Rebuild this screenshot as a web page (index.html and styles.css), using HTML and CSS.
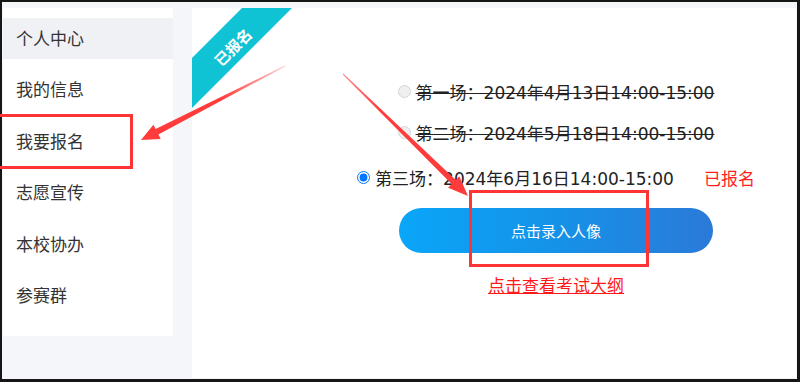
FILE: index.html
```html
<!DOCTYPE html>
<html lang="zh-CN">
<head>
  <meta charset="UTF-8">
  <meta name="viewport" content="width=device-width, initial-scale=1.0">
  <title>我要报名</title>
  <link rel="stylesheet" href="styles.css">
</head>
<body>

<div class="frame">
  <aside class="sidebar">
    <div class="menu-item active">个人中心</div>
    <div class="menu-item">我的信息</div>
    <div class="menu-item">我要报名</div>
    <div class="menu-item">志愿宣传</div>
    <div class="menu-item">本校协办</div>
    <div class="menu-item">参赛群</div>
  </aside>

  <main class="panel">
    <!-- corner ribbon -->
    <svg class="ribbon" width="100" height="100" viewBox="0 0 100 100">
      <polygon points="50,0 100,0 0,100 0,50" fill="#10c3d4"/>
      <text transform="translate(41 39) rotate(-45)" text-anchor="middle" dominant-baseline="central"
            fill="#fff" font-size="15" font-weight="bold">已报名</text>
    </svg>

    <div class="content">
      <label class="session done">
        <input type="radio" name="session" disabled>
        <span>第一场：2024年4月13日14:00-15:00</span>
      </label>
      <label class="session done">
        <input type="radio" name="session" disabled>
        <span>第二场：2024年5月18日14:00-15:00</span>
      </label>
      <label class="session mine">
        <input type="radio" name="session" checked>
        <span>第三场：2024年6月16日14:00-15:00</span>
        <em class="tag">已报名</em>
      </label>

      <button class="capture">点击录入人像</button>
      <a class="outline-link" href="#">点击查看考试大纲</a>
    </div>
  </main>
</div>

<!-- red annotation marks drawn over the page -->
<svg class="marks" width="800" height="382" viewBox="0 0 800 382">
  <defs>
    <linearGradient id="fade1" gradientUnits="userSpaceOnUse" x1="285" y1="66" x2="141" y2="140">
      <stop offset="0" stop-color="#ff3b3b" stop-opacity="0.25"/>
      <stop offset="0.45" stop-color="#ff3b3b" stop-opacity="1"/>
    </linearGradient>
    <linearGradient id="fade2" gradientUnits="userSpaceOnUse" x1="343" y1="74" x2="468" y2="196">
      <stop offset="0" stop-color="#ff3b3b" stop-opacity="0.6"/>
      <stop offset="0.3" stop-color="#ff3b3b" stop-opacity="1"/>
    </linearGradient>
  </defs>
  <rect x="-3" y="115.5" width="134.5" height="52" fill="none" stroke="#ff3535" stroke-width="3"/>
  <rect x="470.5" y="191.5" width="177" height="74" fill="none" stroke="#ff3535" stroke-width="3"/>
  <polygon fill="url(#fade1)"
           points="284.8,65.6 155.6,129.1 153.4,124.7 141,140 160.7,138.9 158.4,134.5 285.2,66.4"/>
  <polygon fill="url(#fade2)"
           points="343.3,73.6 455.8,179.9 459.3,176.3 468,196 448.1,187.7 451.6,184.1 342.7,74.4"/>
</svg>

</body>
</html>
```

FILE: styles.css
```css
html, body {
  margin: 0;
}

body {
  position: relative;
  height: 382px;
  overflow: hidden;
  background: #161616;
  font-family: "Noto Sans", "Noto Sans CJK SC", sans-serif;
}

.frame {
  display: flex;
  align-items: flex-start;
  gap: 19px;
  margin: 2px 3px 0 2px;
  height: 377px;
  padding: 6px 1px 1px 1px;
  box-sizing: border-box;
  background: #f5f6fa;
}

.sidebar {
  flex: none;
  width: 170px;
  height: 328px;
  padding-top: 10px;
  box-sizing: border-box;
  background: #fff;
}

.menu-item {
  height: 41px;
  line-height: 41px;
  margin-bottom: 10.4px;
  padding-left: 13px;
  font-size: 17px;
  color: #333;
}

.menu-item.active {
  background: #f0f1f5;
}

.panel {
  flex: 1;
  align-self: stretch;
  position: relative;
  background: #fff;
}

.ribbon {
  position: absolute;
  top: 0;
  left: 0;
}

.content {
  display: flex;
  flex-direction: column;
  align-items: center;
  padding: 71px 0 0 124px;
}

.session {
  display: flex;
  align-items: center;
  height: 24px;
  font-family: "DejaVu Sans", "Noto Sans CJK SC", sans-serif;
  font-size: 17px;
  color: #222;
}

.session input {
  width: 13px;
  height: 13px;
  margin: 0 5px 0 0;
}

.session.done input {
  appearance: none;
  box-sizing: border-box;
  border: 1px solid #d6d6d6;
  border-radius: 50%;
  background: #efefef;
}

.session.done span {
  text-decoration: line-through;
}

.session + .session {
  margin-top: 17px;
}

.session.mine {
  margin-top: 21px;
}

.tag {
  font-family: "Noto Sans CJK SC", sans-serif;
  font-style: normal;
  color: #ff1f1f;
  margin-left: 30px;
}

.capture {
  margin-top: 19px;
  width: 314px;
  height: 45px;
  border: none;
  border-radius: 23px;
  background: linear-gradient(90deg, #0aa6f9, #1592e8 50%, #2b7ad8);
  color: #fff;
  font-family: inherit;
  font-size: 15px;
}

.outline-link {
  margin-top: 21px;
  line-height: 24px;
  font-size: 17px;
  color: #ff1a1a;
  text-decoration: underline;
}

.marks {
  position: absolute;
  top: 0;
  left: 0;
  pointer-events: none;
}
```
